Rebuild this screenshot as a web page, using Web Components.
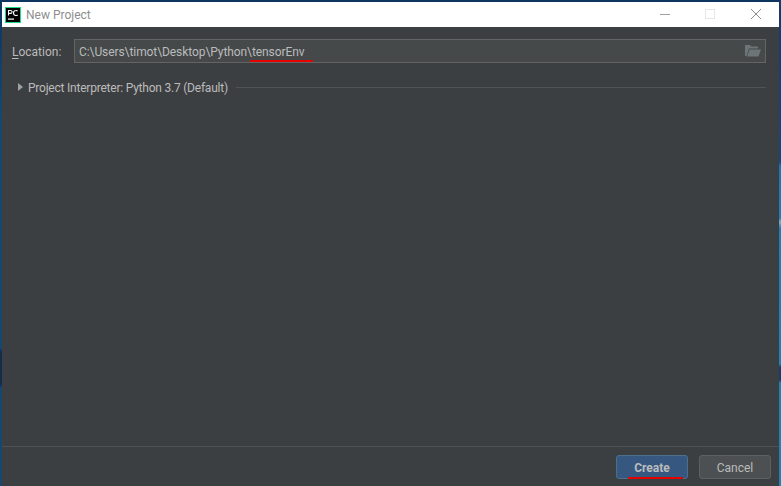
<!DOCTYPE html>
<html>
<head>
<meta charset="utf-8">
<title>New Project</title>
<style>
  html, body { margin: 0; height: 100%; }
  body {
    width: 781px;
    height: 486px;
    overflow: hidden;
    background:
      linear-gradient(#0f3c70 0, #0f4a86 162px, #1578b8 166px, #1a80bb 218px, #7fb0c0 222px, #1a80bb 228px, #1a84bb 364px, #12406e 367px, #12406e 380px, #1c84b9 383px) right top / 2px 100% no-repeat,
      linear-gradient(#0e3560 0, #17476f 120px, #17476f 348px, #122c4a 352px, #122c4a 384px, #17476f 388px) left top / 2px 100% no-repeat,
      #0e3560;
    font-family: Roboto, "Open Sans", sans-serif;
  }
</style>
</head>
<body>
<project-dialog>
  <title-bar slot="title" label="New Project"></title-bar>
  <location-row slot="body" path="C:\Users\timot\Desktop\Python\" tail="tensorEnv"></location-row>
  <interpreter-row slot="body" label="Project Interpreter: Python 3.7 (Default)"></interpreter-row>
  <dialog-button slot="buttons" primary mark>Create</dialog-button>
  <dialog-button slot="buttons">Cancel</dialog-button>
</project-dialog>

<script>
class ProjectDialog extends HTMLElement {
  constructor(){
    super();
    this.attachShadow({mode: 'open'}).innerHTML = `
    <style>
    :host {
      display: flex;
      flex-direction: column;
      box-sizing: border-box;
      width: 777px;
      height: 484px;
      margin: 2px 2px 0;
      background: #3c3f41;
    }
    .body {
      flex: 1;
      display: flex;
      flex-direction: column;
      gap: 13px;
      padding: 12px 13px 0 10px;
    }
    .buttons {
      display: flex;
      justify-content: flex-end;
      gap: 11px;
      height: 40px;
      box-sizing: border-box;
      padding: 8px 8px 0 0;
      border-top: 1px solid #4f5152;
    }
    </style>
    <slot name="title"></slot>
    <div class="body"><slot name="body"></slot></div>
    <div class="buttons"><slot name="buttons"></slot></div>
    `;
  }
}

class TitleBar extends HTMLElement {
  constructor(){
    super();
    this.attachShadow({mode: 'open'}).innerHTML = `
    <style>
    :host {
      display: flex;
      align-items: center;
      height: 25px;
      background: #fff;
      font-size: 12px;
      color: #8e8e8e;
    }
    .logo {
      display: block;
      margin: 0 5px 0 3px;
    }
    .label { flex: 1; }
    .ctl {
      display: block;
      width: 46px;
      height: 25px;
      flex: none;
    }
    </style>
    <svg class="logo" width="16" height="16" viewBox="0 0 16 16">
      <rect x="0.5" y="0.5" width="15" height="15" fill="#000" stroke="#21d789"/>
      <rect x="3" y="11.5" width="6" height="1.2" fill="#fff"/>
      <path d="M3.5 8.5V3.5H5.6a1.4 1.4 0 0 1 0 2.9H3.5" fill="none" stroke="#fff" stroke-width="1.1"/>
      <path d="M12.6 4.2A2 2 0 0 0 11 3.5a2.5 2.5 0 0 0 0 5 2 2 0 0 0 1.6-.7" fill="none" stroke="#fff" stroke-width="1.1"/>
    </svg>
    <span class="label">${this.getAttribute('label')}</span>
    <svg class="ctl" viewBox="0 0 46 25"><rect x="19" y="12" width="10" height="1" fill="#a0a0a0"/></svg>
    <svg class="ctl" viewBox="0 0 46 25"><rect x="18.5" y="7.5" width="9" height="9" fill="none" stroke="#e6e6e6"/></svg>
    <svg class="ctl" viewBox="0 0 46 25"><path d="M18 7l10 10M28 7l-10 10" stroke="#8a8a8a" fill="none"/></svg>
    `;
  }
}

class LocationRow extends HTMLElement {
  constructor(){
    super();
    this.attachShadow({mode: 'open'}).innerHTML = `
    <style>
    :host {
      display: flex;
      align-items: center;
      font-size: 12px;
      color: #bbbbbb;
    }
    .label { width: 62px; flex: none; padding-top: 1px; }
    u { text-underline-offset: 2px; }
    .field {
      flex: 1;
      display: flex;
      align-items: center;
      justify-content: space-between;
      box-sizing: border-box;
      height: 24px;
      padding: 1px 4px 0 4px;
      background: #45494a;
      border: 1px solid #646464;
    }
    .path { letter-spacing: -0.08px; }
    .tail { position: relative; }
    .tail::after {
      content: "";
      position: absolute;
      left: -2px;
      right: -8px;
      bottom: -3px;
      height: 2px;
      background: #e60000;
    }
    svg { display: block; margin-top: -1px; }
    </style>
    <span class="label"><u>L</u>ocation:</span>
    <div class="field">
      <span class="path">${this.getAttribute('path')}<span class="tail">${this.getAttribute('tail')}</span></span>
      <svg width="16" height="12" viewBox="0 0 16 12">
        <path d="M0 0h5l1 1.5h7V3.5H4L1.5 11H0z" fill="#6e7577"/>
        <path d="M4.5 4.5H16L13.5 11.5H2z" fill="#6e7577"/>
      </svg>
    </div>
    `;
  }
}

class InterpreterRow extends HTMLElement {
  constructor(){
    super();
    this.attachShadow({mode: 'open'}).innerHTML = `
    <style>
    :host {
      display: flex;
      align-items: center;
      gap: 5px;
      height: 22px;
      padding-left: 6px;
      font-size: 12px;
      color: #bbbbbb;
    }
    .arrow {
      width: 0;
      height: 0;
      border-left: 5px solid #a0a0a0;
      border-top: 4px solid transparent;
      border-bottom: 4px solid transparent;
    }
    .text { padding-top: 1px; letter-spacing: -0.22px; }
    .line { flex: 1; height: 1px; background: #515354; margin-left: 3px; }
    </style>
    <span class="arrow"></span>
    <span class="text">${this.getAttribute('label')}</span>
    <span class="line"></span>
    `;
  }
}

class DialogButton extends HTMLElement {
  constructor(){
    super();
    this.attachShadow({mode: 'open'}).innerHTML = `
    <style>
    :host {
      display: flex;
      align-items: center;
      justify-content: center;
      position: relative;
      box-sizing: border-box;
      width: 72px;
      height: 24px;
      padding-top: 1px;
      font-size: 12px;
      color: #bbbbbb;
      background: #4c5052;
      border: 1px solid #5e6060;
      border-radius: 3px;
    }
    :host([primary]) {
      background: #365880;
      border-color: #4c708c;
      font-weight: 700;
    }
    :host([mark])::after {
      content: "";
      position: absolute;
      left: 11px;
      right: 4px;
      bottom: -1px;
      height: 2px;
      background: #e60000;
    }
    </style>
    <slot></slot>
    `;
  }
}

customElements.define('project-dialog', ProjectDialog);
customElements.define('title-bar', TitleBar);
customElements.define('location-row', LocationRow);
customElements.define('interpreter-row', InterpreterRow);
customElements.define('dialog-button', DialogButton);
</script>
</body>
</html>
